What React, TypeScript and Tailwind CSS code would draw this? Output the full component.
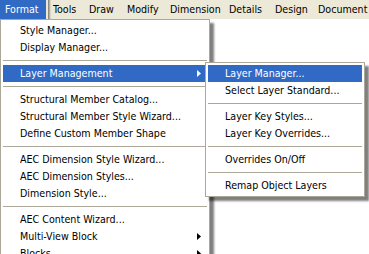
import React from "react";

const menuBar = [
  { label: "Tools", w: "w-[36px]" },
  { label: "Draw", w: "w-[38px]" },
  { label: "Modify", w: "w-[43px]" },
  { label: "Dimension", w: "w-[59px]" },
  { label: "Details", w: "w-[46px]" },
  { label: "Design", w: "w-[43px]" },
  { label: "Document", w: "w-[51px]" },
];

type Entry = { label?: string; active?: boolean; sub?: boolean; sep?: boolean };

const formatMenu: Entry[] = [
  { label: "Style Manager..." },
  { label: "Display Manager..." },
  { sep: true },
  { label: "Layer Management", active: true, sub: true },
  { sep: true },
  { label: "Structural Member Catalog..." },
  { label: "Structural Member Style Wizard..." },
  { label: "Define Custom Member Shape" },
  { sep: true },
  { label: "AEC Dimension Style Wizard..." },
  { label: "AEC Dimension Styles..." },
  { label: "Dimension Style..." },
  { sep: true },
  { label: "AEC Content Wizard..." },
  { label: "Multi-View Block", sub: true },
  { label: "Blocks", sub: true },
];

const layerMenu: Entry[] = [
  { label: "Layer Manager...", active: true },
  { label: "Select Layer Standard..." },
  { sep: true },
  { label: "Layer Key Styles..." },
  { label: "Layer Key Overrides..." },
  { sep: true },
  { label: "Overrides On/Off" },
  { sep: true },
  { label: "Remap Object Layers" },
];

function Arrow({ white }: { white?: boolean }) {
  return (
    <svg width="4" height="7" viewBox="0 0 4 7" className="shrink-0">
      <path d="M0 0 L4 3.5 L0 7 Z" fill={white ? "#ffffff" : "#000000"} />
    </svg>
  );
}

function MenuRows({ items }: { items: Entry[] }) {
  return (
    <>
      {items.map((it, i) =>
        it.sep ? (
          <div key={i} className="flex h-[9px] items-center">
            <div className="h-px w-full bg-[#aca899]" />
          </div>
        ) : (
          <div
            key={i}
            className={`flex h-[17px] items-center pl-[17px] pr-[6px] ${
              it.active ? "bg-[#316ac5] text-white" : "text-black"
            }`}
          >
            <span className="flex-1 whitespace-nowrap">{it.label}</span>
            {it.sub && <Arrow white={it.active} />}
          </div>
        )
      )}
    </>
  );
}

export default function App() {
  return (
    <div className="h-[254px] w-[369px] overflow-hidden bg-white font-['DejaVu_Sans_Condensed','Liberation_Sans',sans-serif] text-[10.6px] leading-none">
      {/* Menu bar */}
      <div className="flex h-[19px] items-stretch bg-[#ece9d8] text-black">
        <div className="flex w-[46px] shrink-0 items-center bg-[#316ac5] pl-[5px] text-white">Format</div>
        <div className="ml-[2px] mr-[2px] w-[3px] shrink-0 bg-gradient-to-r from-[#7c7a6c] to-[#ece9d8]" />
        {menuBar.map((m) => (
          <div key={m.label} className={`flex shrink-0 items-center whitespace-nowrap ${m.w}`}>
            {m.label}
          </div>
        ))}
      </div>

      {/* Format dropdown */}
      <div className="relative w-[210px] border border-[#aca899] bg-white p-[2px] shadow-[4px_4px_2px_rgba(0,0,0,0.5)]">
        <MenuRows items={formatMenu} />

        {/* Layer Management submenu */}
        <div className="absolute left-[204px] top-[42px] w-[160px] border border-[#aca899] bg-white p-[2px] shadow-[4px_4px_2px_rgba(0,0,0,0.5)]">
          <MenuRows items={layerMenu} />
        </div>
      </div>
    </div>
  );
}
